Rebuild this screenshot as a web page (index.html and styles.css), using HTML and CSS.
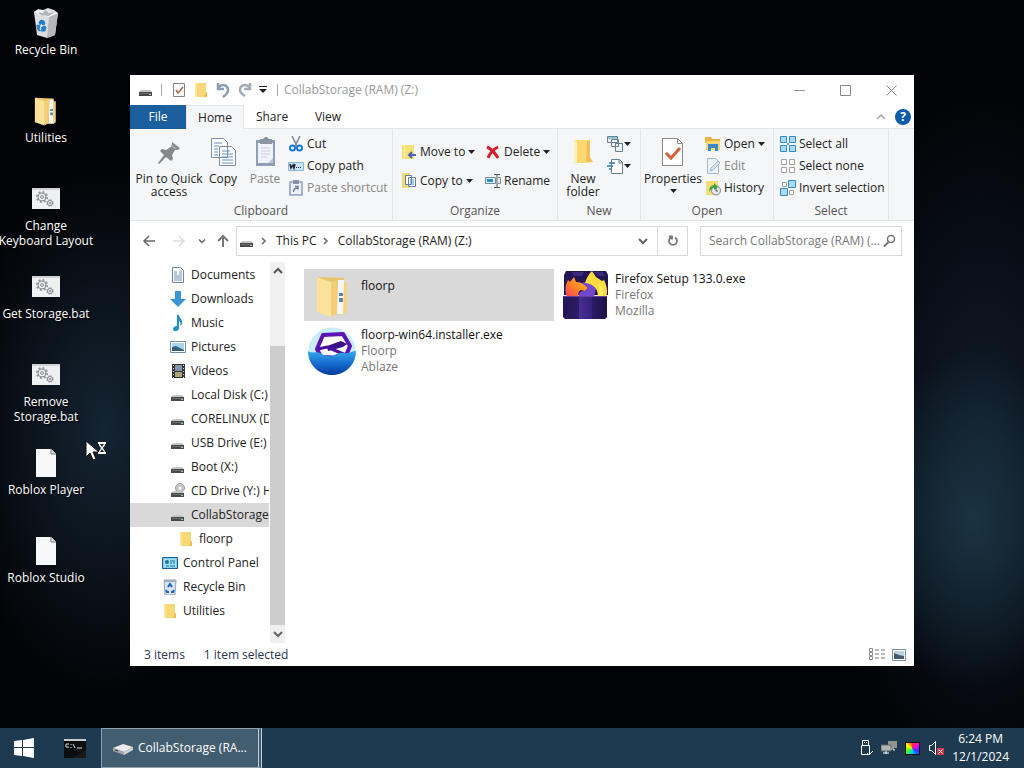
FILE: index.html
```html
<!DOCTYPE html>
<html lang="en">
<head>
  <meta charset="UTF-8" />
  <meta name="viewport" content="width=device-width, initial-scale=1.0" />
  <title>CollabStorage (RAM) (Z:)</title>
  <link rel="stylesheet" href="styles.css">
</head>
<body>
  <!-- shared icons -->
  <svg class="defs" aria-hidden="true">
    <symbol id="drive" viewBox="0 0 16 16">
      <path d="M3 8h9l2 2H1z" fill="#c4c4c4"/>
      <path d="M1 10h13v4H1z" fill="#484848"/>
      <path d="M2 11h11v1H2z" fill="#6c6c6c"/>
      <path d="M11 12h2v1h-2z" fill="#9fc9a5"/>
    </symbol>
    <symbol id="folder" viewBox="0 0 16 16">
      <path d="M2 1h11v10h1v4H2z" fill="#f8d775"/>
      <path d="M2 1h2v14H2z" fill="#fce59a"/>
      <path d="M13 10h1v5h-3z" fill="#e9bf54"/>
    </symbol>
    <symbol id="bigfolder" viewBox="0 0 48 48">
      <path d="M9 6l27 1v36l-18 1z" fill="#e8c368"/>
      <path d="M30 9h6v34h-7z" fill="#f4f6f8"/>
      <path d="M31 22h4v3h-4zM31 27h4v4h-4z" fill="#5d86ad"/>
      <path d="M36 11h3v30l-4 3z" fill="#f4d57c"/>
      <path d="M9 6l14 5v35L9 41z" fill="#fbe29a"/>
      <path d="M23 11l6-2v33l-6 4z" fill="#f2cf77"/>
    </symbol>
    <symbol id="bat" viewBox="0 0 28 22">
      <path d="M0 0h28v21H0z" fill="#eef0f2"/>
      <path d="M0 0h28v2H0z" fill="#cfd3d6"/>
      <g fill="none" stroke="#8b9095">
        <circle cx="10" cy="9" r="4"/><circle cx="10" cy="9" r="1.5"/>
        <circle cx="10" cy="9" r="5" stroke-width="2" stroke-dasharray="1.9 2"/>
        <circle cx="18" cy="15" r="2.6"/><circle cx="18" cy="15" r="1"/>
        <circle cx="18" cy="15" r="3.3" stroke-dasharray="1.3 1.3"/>
      </g>
    </symbol>
    <symbol id="page" viewBox="0 0 22 28">
      <path d="M1 0h15l5 5v23H1z" fill="#f6f8f9"/>
      <path d="M16 0v5h5" fill="#dfe3e6" stroke="#777" stroke-width="1"/>
    </symbol>
    <symbol id="bin" viewBox="0 0 28 30">
      <path d="M2 4l4-3 5 1 5-2 6 2 4 3-3 22-8 3-10-3z" fill="#dcdfe1"/>
      <path d="M17 9l9-4-3 22-8 3z" fill="#b4b8bb"/>
      <path d="M2 4l8-2 6 2 10 1-9 4z" fill="#f7f8f8"/>
      <path d="M6 4l5 1 2-3 4 3 6-1-6 4-8-1z" fill="#aeb4b8"/>
      <path d="M7 14l2-2 3 1 1 3-2 1-2-2-1 2zM5 17l3 1-1 3 1 2-2-1-1-3zM9 20l3-2 2 1-1 4H9v-1l2-1z" fill="#247fcb" stroke="#247fcb"/>
    </symbol>
    <symbol id="caret" viewBox="0 0 7 4"><path d="M0 0h7L3.5 4z" fill="#222"/></symbol>
    <symbol id="chev-right" viewBox="0 0 8 10"><path d="M2 2l3 3-3 3" fill="none" stroke="#666" stroke-width="1.5"/></symbol>
    <symbol id="chev-down" viewBox="0 0 10 8"><path d="M1 2l4 4 4-4" fill="none" stroke="#666" stroke-width="2"/></symbol>
    <symbol id="picture" viewBox="0 0 16 16">
      <path d="M.5 2.5h15v11H.5z" fill="#fff" stroke="#7590a6"/>
      <path d="M2 4h12v8H2z" fill="#a8d5ef"/>
      <path d="M2 8l4-1 8 4v1H2z" fill="#35617c"/>
    </symbol>
  </svg>

  <div class="desktop">
    <ul class="shortcuts">
      <li><svg width="28" height="30"><use href="#bin"/></svg><span>Recycle Bin</span></li>
      <li><svg width="32" height="32" viewBox="4 2 42 46"><use href="#bigfolder" width="48" height="48"/></svg><span>Utilities</span></li>
      <li><svg width="28" height="22"><use href="#bat"/></svg><span>Change<br>Keyboard Layout</span></li>
      <li><svg width="28" height="22"><use href="#bat"/></svg><span>Get Storage.bat</span></li>
      <li><svg width="28" height="22"><use href="#bat"/></svg><span>Remove<br>Storage.bat</span></li>
      <li><svg width="22" height="28"><use href="#page"/></svg><span>Roblox Player</span></li>
      <li><svg width="22" height="28"><use href="#page"/></svg><span>Roblox Studio</span></li>
    </ul>

    <main class="window">
      <header class="titlebar">
        <svg width="16" height="16"><use href="#drive"/></svg>
        <i class="sep"></i>
        <button aria-label="Properties"><svg width="14" height="16" viewBox="0 0 14 16"><path d="M1.5 1.5h11v13h-11z" fill="#fbfbfb" stroke="#8d8179"/><path d="M4 8l2 3 5-6" fill="none" stroke="#9d6f52" stroke-width="1.5"/></svg></button>
        <button aria-label="New folder"><svg width="16" height="16"><use href="#folder"/></svg></button>
        <button aria-label="Undo"><svg width="16" height="16" viewBox="0 0 16 16"><path d="M3 1v6h6M3 6c4-5 10-3 10 2 0 3-2 5-5 7" fill="none" stroke="#8d9db3" stroke-width="2.5"/></svg></button>
        <button aria-label="Redo"><svg width="16" height="16" viewBox="0 0 16 16"><path d="M13 1v6H7M13 6C9 1 3 3 3 8c0 3 2 4 5 6" fill="none" stroke="#a3acb7" stroke-width="2.5"/></svg></button>
        <button aria-label="Customize toolbar" class="narrow"><svg width="8" height="8" viewBox="0 0 8 8"><path d="M0 0h8v1H0zM0 3h8L4 7z" fill="#222"/></svg></button>
        <i class="sep"></i>
        <h1>CollabStorage (RAM) (Z:)</h1>
        <div class="controls">
          <button aria-label="Minimize"><svg width="11" height="11" viewBox="0 0 11 11"><path d="M0 5.5h11" stroke="#999"/></svg></button>
          <button aria-label="Maximize"><svg width="11" height="11" viewBox="0 0 11 11"><path d="M.5.5h10v10H.5z" fill="none" stroke="#888"/></svg></button>
          <button aria-label="Close"><svg width="11" height="11" viewBox="0 0 11 11"><path d="M.5.5l10 10M10.5.5l-10 10" stroke="#888"/></svg></button>
        </div>
      </header>

      <nav class="tabs">
        <button class="file">File</button>
        <button class="active">Home</button>
        <button>Share</button>
        <button>View</button>
        <div class="tabs-right">
          <button aria-label="Collapse ribbon"><svg width="10" height="8" viewBox="0 0 10 8"><path d="M1 6l4-4 4 4" fill="none" stroke="#aaa" stroke-width="1.5"/></svg></button>
          <button class="help" aria-label="Help">?</button>
        </div>
      </nav>

      <div class="ribbon">
        <section class="group clipboard">
          <div class="tools">
            <button class="big pin"><svg width="32" height="32" viewBox="0 0 32 32"><path d="M19 6l8 6-2 2-3 0-3 5 1 4-2 2-5-4-7 7-1-1 6-8-4-4 2-2 4 1 6-4z" fill="#85898c"/><path d="M18 9l5 4" stroke="#b0b4b7" stroke-width="1.5"/></svg>Pin to Quick<br>access</button>
            <button class="big"><svg width="32" height="32" viewBox="0 0 32 32"><g fill="#fff" stroke="#7c8ea6"><path d="M4.5 2.5h12l4 4v15h-16zM12.5 10.5h12l4 4v15h-16z"/></g><path d="M7 7h8M7 10h5M7 13h4M7 16h4M7 19h4M15 15h8M15 18h11M15 21h11M15 24h11M15 27h11" stroke="#5f91c5"/></svg>Copy</button>
            <button class="big off"><svg width="32" height="32" viewBox="0 0 32 32"><path d="M7 4h19v26H7z" fill="#8e9fb8"/><path d="M9 7h15v20H9z" fill="#f0f4fa"/><path d="M11 3h3l2-2h2l2 2h3v5H11z" fill="#8a94a3"/><path d="M12 12h9M12 15h9M12 18h9M12 21h6" stroke="#c3d0e2"/><path d="M24 22v5h-5z" fill="#b8c4d8"/></svg>Paste</button>
            <div class="stack">
              <button><svg width="16" height="16" viewBox="0 0 16 16"><path d="M4 0l5 10M12 0L7 10" stroke="#7d858c" stroke-width="1.5"/><g fill="none" stroke="#1979ca" stroke-width="2"><circle cx="4.500" cy="12" r="2.500"/><circle cx="11.500" cy="12" r="2.500"/></g></svg>Cut</button>
              <button><svg width="16" height="16" viewBox="0 0 16 16"><path d="M.5 4.500h15v8H.5z" fill="#c7e6f7" stroke="#8fb6cf"/><path d="M2 6l1 4 2-3 1 3 1-4" fill="none" stroke="#223" stroke-width="1.500"/><path d="M8 9h1v1H8zM10 9h1v1h-1zM12 9h1v1h-1z" fill="#223"/></svg>Copy path</button>
              <button class="off"><svg width="16" height="16" viewBox="0 0 16 16"><path d="M2 2h12v13H2z" fill="#eef2f8" stroke="#8e9fb8" stroke-width="1.500"/><path d="M5 0h6v4H5z" fill="#8a94a3"/><path d="M5.500 12c0-3 1-4 4-4M7 6.500h3v3" fill="none" stroke="#6f83a0" stroke-width="1.500"/></svg>Paste shortcut</button>
            </div>
          </div>
          <h2>Clipboard</h2>
        </section>

        <section class="group organize">
          <div class="tools">
            <div class="stack">
              <button><svg width="16" height="16" viewBox="0 0 16 16"><path d="M1 1h12v14H1z" fill="#f5df76"/><path d="M3 1h1v14H3z" fill="#fbf0b0"/><path d="M15 11H9M11 8l-3 3 3 3" fill="none" stroke="#4a62b5" stroke-width="2"/></svg>Move to<svg class="caret" width="7" height="4"><use href="#caret"/></svg></button>
              <button><svg width="16" height="16" viewBox="0 0 16 16"><path d="M1 0h8v15H1z" fill="#f5d976"/><path d="M4.500 2.500h6v9h-6zM7.500 4.500h7v9h-7z" fill="#fff" stroke="#627fa8"/><path d="M9 7h4M9 9h4M9 11h4" stroke="#5f91c5"/></svg>Copy to<svg class="caret" width="7" height="4"><use href="#caret"/></svg></button>
            </div>
            <div class="stack">
              <button><svg width="16" height="16" viewBox="0 0 16 16"><path d="M2 3c5 2 8 6 11 11M13 3C9 5 5 9 3 14" fill="none" stroke="#d61f2c" stroke-width="3"/></svg>Delete<svg class="caret" width="7" height="4"><use href="#caret"/></svg></button>
              <button><svg width="16" height="16" viewBox="0 0 16 16"><path d="M.5 4.500h10v6H.5zM13 4.500h2.500v6H13" fill="#e5f1f9" stroke="#6b8ba6"/><path d="M2 6h6v3H2z" fill="#2d8fcc"/><path d="M9 1.500h6M12 1.500v13M9 14.500h6" stroke="#555"/></svg>Rename</button>
            </div>
          </div>
          <h2>Organize</h2>
        </section>

        <section class="group new">
          <div class="tools">
            <button class="big"><svg width="32" height="32" viewBox="0 0 32 32"><path d="M7 4h16v17l3 5-8 1H7z" fill="#ffd76f"/><path d="M7 4l3 1v24l-3-3z" fill="#fff0b5"/><path d="M20 5h3v17l3 4h-7z" fill="#efc15a"/></svg>New<br>folder</button>
            <div class="stack">
              <button aria-label="New item"><svg width="16" height="16" viewBox="0 0 16 16"><g fill="#edf5fa" stroke="#6a7f8e"><path d="M.5.5h10v6H.5zM4.500 3.500h7v7h-7zM8.500 7.500h7v8h-7z"/></g><path d="M1 1h9v2H1z" fill="#90cbd9"/></svg><svg class="caret" width="7" height="4"><use href="#caret"/></svg></button>
              <button aria-label="Easy access"><svg width="16" height="16" viewBox="0 0 16 16"><path d="M4.500 1.500h8l3 3v11h-11z" fill="#fff" stroke="#6a7f8e"/><path d="M12 1v4h4" fill="none" stroke="#6a7f8e"/><path d="M2 5h6M0 8h6M2 11h2" stroke="#287ab5" stroke-width="1.500"/></svg><svg class="caret" width="7" height="4"><use href="#caret"/></svg></button>
            </div>
          </div>
          <h2>New</h2>
        </section>

        <section class="group open">
          <div class="tools">
            <button class="big"><svg width="32" height="32" viewBox="0 0 32 32"><path d="M5.500 2.500h15l5 5v22h-20z" fill="#fff" stroke="#8a8a8a"/><path d="M20.500 2.500v5h5" fill="none" stroke="#8a8a8a"/><path d="M9 17l5 5 9-10" fill="none" stroke="#d56036" stroke-width="3"/></svg>Properties<svg class="caret" width="7" height="4"><use href="#caret"/></svg></button>
            <div class="stack">
              <button><svg width="16" height="16" viewBox="0 0 16 16"><path d="M0 1h6l1 2h8v4H0z" fill="#e9b13e"/><path d="M1 5h14v9H1z" fill="#f7d873"/><path d="M3 15V8h10v7h-3v-3H6v3z" fill="#3c87c9"/></svg>Open<svg class="caret" width="7" height="4"><use href="#caret"/></svg></button>
              <button class="off"><svg width="16" height="16" viewBox="0 0 16 16"><path d="M2.500.5h8l3 3v12h-11z" fill="#edf4fa" stroke="#a5b9c9"/><path d="M5 13l1-3 7-7 2 2-7 7z" fill="#d8e5f0" stroke="#9bb3c7"/></svg>Edit</button>
              <button><svg width="16" height="16" viewBox="0 0 16 16"><path d="M1 1h12v14H1z" fill="#f5dc78"/><circle cx="11" cy="10.500" r="4.500" fill="#e4eaea" stroke="#7d8889"/><path d="M11 8v3h2" fill="none" stroke="#555"/><path d="M4 12c0-4 2-7 5-7V3l4 4-4 3V8c-2 0-4 2-5 4z" fill="#43a047"/></svg>History</button>
            </div>
          </div>
          <h2>Open</h2>
        </section>

        <section class="group select">
          <div class="tools">
            <div class="stack">
              <button><svg width="16" height="16" viewBox="0 0 16 16"><path d="M.5.500h6v6h-6zM9.500.500h6v6h-6zM.5 9.500h6v6h-6zM9.500 9.500h6v6h-6z" fill="#a9dbf8" stroke="#308ac5"/><path d="M7 8h2M8 7v2" stroke="#308ac5"/></svg>Select all</button>
              <button><svg width="16" height="16" viewBox="0 0 16 16"><path d="M1.500 1.500h5v5h-5zM9.500 1.500h5v5h-5zM1.500 9.500h5v5h-5zM9.500 9.500h5v5h-5z" fill="#fff" stroke="#a5a09e"/></svg>Select none</button>
              <button><svg width="16" height="16" viewBox="0 0 16 16"><path d="M2.500 2.500h4v4h-4zM9.500 10.500h4v4h-4z" fill="#fff" stroke="#a5a09e"/><path d="M8.500.5h7v7h-7zM.5 8.500h7v7h-7z" fill="#a9dbf8" stroke="#308ac5"/></svg>Invert selection</button>
            </div>
          </div>
          <h2>Select</h2>
        </section>
      </div>

      <div class="navbar">
        <button class="nav-btn" aria-label="Back"><svg width="14" height="14" viewBox="0 0 14 14"><path d="M13 7H2M7 2L2 7l5 5" fill="none" stroke="#666" stroke-width="1.500"/></svg></button>
        <button class="nav-btn" aria-label="Forward"><svg width="14" height="14" viewBox="0 0 14 14"><path d="M1 7h11M7 2l5 5-5 5" fill="none" stroke="#ddd" stroke-width="1.500"/></svg></button>
        <button class="nav-btn recent" aria-label="Recent locations"><svg width="8" height="6" viewBox="0 0 10 8"><use href="#chev-down" width="10" height="8"/></svg></button>
        <button class="nav-btn up" aria-label="Up"><svg width="14" height="14" viewBox="0 0 14 14"><path d="M7 13V2M2 7l5-5 5 5" fill="none" stroke="#777" stroke-width="2"/></svg></button>
        <div class="address">
          <svg width="16" height="16"><use href="#drive"/></svg>
          <svg class="crumb" width="8" height="10"><use href="#chev-right"/></svg>
          <a href="#">This PC</a>
          <svg class="crumb" width="8" height="10"><use href="#chev-right"/></svg>
          <a href="#">CollabStorage (RAM) (Z:)</a>
          <button class="drop" aria-label="Previous locations"><svg width="10" height="8"><use href="#chev-down"/></svg></button>
          <button class="refresh" aria-label="Refresh"><svg width="12" height="12" viewBox="0 0 12 12"><path d="M8 2.500a4 4 0 1 1-4 0M2 1.500h3v3" fill="none" stroke="#777" stroke-width="1.800"/></svg></button>
        </div>
        <label class="search">
          <input type="text" aria-label="Search" placeholder="Search CollabStorage (RAM) (...">
          <svg width="14" height="14" viewBox="0 0 14 14"><circle cx="9" cy="5" r="3.500" fill="none" stroke="#777" stroke-width="1.500"/><path d="M6.500 8L2 12.500" stroke="#777" stroke-width="2"/></svg>
        </label>
      </div>

      <div class="content">
        <aside class="sidebar">
          <ul class="tree">
            <li><svg width="16" height="16" viewBox="0 0 16 16"><path d="M2.500.5h8l3 3v12h-11z" fill="#fff" stroke="#70869b"/><path d="M4 5h3M4 7h3M4 9h8M4 11h8M4 13h8M9 5h3M9 7h3" stroke="#6a91b5"/></svg>Documents</li>
            <li><svg width="16" height="16" viewBox="0 0 16 16"><path d="M5 0h6v8h5l-8 8-8-8h5z" fill="#3a95d8"/></svg>Downloads</li>
            <li><svg width="16" height="16" viewBox="0 0 16 16"><path d="M7 0h2c0 3 4 4 3 9l-2 2c1-3 0-5-1-5v7c0 4-6 4-6 1 0-2 2-3 4-3z" fill="#1e90c8"/></svg>Music</li>
            <li><svg width="16" height="16"><use href="#picture"/></svg>Pictures</li>
            <li><svg width="16" height="16" viewBox="0 0 16 16"><path d="M2 1h13v14H2z" fill="#333"/><path d="M5 2h7v6H5z" fill="#7f96a8"/><path d="M5 9h7v5H5z" fill="#b0a276"/><path d="M3.500 2v13M13.500 2v13" stroke="#ddd" stroke-dasharray="1 2"/></svg>Videos</li>
            <li><svg width="16" height="16"><use href="#drive"/></svg>Local Disk (C:)</li>
            <li><svg width="16" height="16"><use href="#drive"/></svg>CORELINUX (D</li>
            <li><svg width="16" height="16"><use href="#drive"/></svg>USB Drive (E:)</li>
            <li><svg width="16" height="16"><use href="#drive"/></svg>Boot (X:)</li>
            <li><svg width="16" height="16" viewBox="0 0 16 16"><circle cx="10" cy="5" r="4.500" fill="#c8c8c8" stroke="#999"/><circle cx="10" cy="5" r="1.500" fill="#fff"/><use href="#drive" width="16" height="16"/></svg>CD Drive (Y:) H</li>
            <li class="selected"><svg width="16" height="16"><use href="#drive"/></svg>CollabStorage</li>
            <li class="deep"><svg width="16" height="16"><use href="#folder"/></svg>floorp</li>
            <li class="top"><svg width="16" height="16" viewBox="0 0 16 16"><path d="M.5 2.500h15v11H.5z" fill="#7ed0ef" stroke="#1c5d97"/><path d="M2 4h12v8H2z" fill="#9ce1f3"/><circle cx="5" cy="7" r="2" fill="#1d70a5"/><path d="M8 6h5M8 8h2M11 8h2M4 11h3M8 11h5" stroke="#246da0"/></svg>Control Panel</li>
            <li class="top"><svg width="16" height="16" viewBox="0 0 16 16"><path d="M2 1h12l-1 15H3z" fill="#d8e2ea" stroke="#94a6b4"/><path d="M2 1h12v2H2z" fill="#9fb0bd"/><path d="M6 8l2-3 2 3M4 11l1 2h2M12 11l-1 2H9" fill="none" stroke="#2166b2" stroke-width="2"/></svg>Recycle Bin</li>
            <li class="top"><svg width="16" height="16"><use href="#folder"/></svg>Utilities</li>
          </ul>
          <div class="scrollbar">
            <button aria-label="Scroll up"><svg width="10" height="8" viewBox="0 0 10 8"><path d="M1 6l4-4 4 4" fill="none" stroke="#555" stroke-width="2"/></svg></button>
            <div class="track"><div class="thumb"></div></div>
            <button aria-label="Scroll down"><svg width="10" height="8"><use href="#chev-down"/></svg></button>
          </div>
        </aside>

        <div class="files">
          <div class="tile selected">
            <svg width="48" height="48"><use href="#bigfolder"/></svg>
            <div class="info"><strong>floorp</strong></div>
          </div>
          <div class="tile">
            <svg width="48" height="48" viewBox="0 0 48 48">
              <defs>
                <linearGradient id="fire" x1="0" x2="1" y1="1" y2="0"><stop offset="0" stop-color="#f43b60"/><stop offset=".5" stop-color="#ff8a22"/><stop offset="1" stop-color="#ffbd35"/></linearGradient>
                <linearGradient id="box" x1="0" x2="1"><stop offset="0" stop-color="#241653"/><stop offset=".36" stop-color="#2b1c66"/><stop offset=".37" stop-color="#4a2e94"/><stop offset=".65" stop-color="#35227a"/><stop offset=".66" stop-color="#2b1c66"/><stop offset="1" stop-color="#201047"/></linearGradient>
              </defs>
              <path d="M4 0h40l2 4v20H2V4z" fill="#251453"/>
              <path d="M10 1h12l-2 4h-8zM32 1h9l2 4h-7z" fill="#3b2a80"/>
              <path d="M5 26C2 18 4 13 6 9l2 2 4-5 2 5c6 0 9 3 12 6l-3 3-4-1c-3 1-3 5-2 7z" fill="url(#fire)"/>
              <path d="M20 12c6-3 12 0 14 5l-2 9H17c-1-3 1-6 4-6 3 0 5-2 4-4z" fill="#7447cf"/>
              <path d="M23 12c2-6 4-9 7-12l4 6 6 4 2-1c3 6 4 12 2 17h-8c0-8-4-13-13-14z" fill="#ffdc3d"/>
              <path d="M37 12c3 4 5 9 4 14h-5c1-3 2-8 1-14z" fill="#fff064"/>
              <path d="M1 26h44v20l-2 2H3l-2-2z" fill="url(#box)"/>
              <path d="M1 25h44v1H1z" fill="#65409b"/>
            </svg>
            <div class="info"><strong>Firefox Setup 133.0.exe</strong><span>Firefox</span><span>Mozilla</span></div>
          </div>
          <div class="tile">
            <svg width="48" height="48" viewBox="0 0 48 48">
              <defs><linearGradient id="sea" x1="0" x2="0" y1="0" y2="1"><stop offset="0" stop-color="#36a8ec"/><stop offset=".5" stop-color="#176ed2"/><stop offset="1" stop-color="#053b9d"/></linearGradient></defs>
              <circle cx="24" cy="24" r="23.500" fill="#c9eefb"/>
              <path d="M15 8l20-1 7 12-5 12-24-1-4-8z" fill="#fff" stroke="#5c13b4" stroke-width="4" stroke-linejoin="round"/>
              <path d="M19 19l14-5 6 3-4 3-15 4z" fill="#38108a"/>
              <path d="M10 22l9-2 19 8" fill="none" stroke="#4a10a0" stroke-width="3"/>
              <path d="M0 24c4 3 8 0 12 2s8 4 12 3 7-4 12-3 8-2 12-2c0 14-11 24-24 24S0 38 0 24z" fill="url(#sea)"/>
            </svg>
            <div class="info"><strong>floorp-win64.installer.exe</strong><span>Floorp</span><span>Ablaze</span></div>
          </div>
        </div>
      </div>

      <footer class="statusbar">
        <span>3 items</span>
        <span>1 item selected</span>
        <div class="views">
          <button aria-label="Details view"><svg width="17" height="13" viewBox="0 0 17 13"><path d="M.5.5h3v3h-3zM.5 4.500h3v3h-3zM.5 8.500h3v3h-3z" fill="none" stroke="#8a8a8a"/><path d="M6 2h4M6 6h4M6 10h4M12 2h4M12 6h4M12 10h4" stroke="#777"/></svg></button>
          <button aria-label="Large icons view"><svg width="14" height="12" viewBox="0 0 14 12"><path d="M.5.5h13v11H.5z" fill="#fff" stroke="#7590a6"/><path d="M2 2h10v8H2z" fill="#bdd4e3"/><path d="M2 4l5 2 5 1v3H2z" fill="#45596b"/></svg></button>
        </div>
      </footer>
    </main>

    <!-- busy pointer -->
    <svg class="pointer" width="22" height="22" viewBox="0 0 22 22">
      <path d="M1 1v16l4-4 3 7 3-1-3-7h6z" fill="#fff" stroke="#111"/>
      <path d="M13 2h8v2h-1c0 3-2 3-2 4s2 2 2 4h1v2h-8v-2h1c0-2 2-3 2-4s-2-1-2-4h-1z" fill="#fff"/>
      <path d="M15 4h4l-2 3zM17 9l2 3h-4z" fill="#222"/>
    </svg>
  </div>

  <footer class="taskbar">
    <button class="start" aria-label="Start"><svg width="20" height="20" viewBox="0 0 20 20"><path d="M0 3l8-1v7H0zM9 2l11-2v9H9zM0 10h8v8l-8-1zM9 10h11v10L9 18z" fill="#fff"/></svg></button>
    <button class="cmd" aria-label="Command Prompt"><svg width="22" height="19" viewBox="0 0 22 19"><path d="M0 0h22v19H0z" fill="#0b0d0e"/><path d="M0 0h22v2H0z" fill="#c6cbce"/><path d="M2 5h3M2 5v3h3M7 5v1M7 8v1M9 5l2 4M13 9h5" stroke="#ddd" fill="none"/><path d="M22 11v8H8z" fill="#222" opacity=".6"/></svg></button>
    <button class="task">
      <svg width="22" height="14" viewBox="0 0 22 14"><path d="M1 7l10-4 10 3-9 5z" fill="#e9ebec"/><path d="M1 7l11 4v3L1 10z" fill="#a2a6a9"/><path d="M12 11l9-5v3l-9 5z" fill="#cfd2d4"/><path d="M3 9l3 1" stroke="#333"/></svg>
      <span>CollabStorage (RA...</span>
    </button>
    <div class="tray">
      <svg width="14" height="18" viewBox="0 0 14 18"><path d="M3.500 6V1.500h6V6M2.500 6.500h8v9h-8zM5 3.500h1M7 3.500h1" fill="none" stroke="#fff"/><path d="M8 14l2 2 4-4" fill="none" stroke="#fff"/></svg>
      <svg width="16" height="16" viewBox="0 0 16 16"><path d="M7 1h9v7H7z" fill="#8f9394"/><path d="M0 5h10v6H0z" fill="#b5b5b2" stroke="#5e676d"/><path d="M2 13h6M5 11v3M10 9h3v2" stroke="#fff"/></svg>
      <i class="spectrum"></i>
      <svg width="16" height="16" viewBox="0 0 16 16"><path d="M1.500 5.500h2l4-4v13l-4-4h-2z" fill="none" stroke="#fff"/><path d="M9 8h7v7H9z" fill="#d9364c"/><path d="M10.500 9.500l4 4M14.500 9.500l-4 4" stroke="#fff"/></svg>
      <time>6:24 PM<br>12/1/2024</time>
    </div>
  </footer>
</body>
</html>
```
FILE: styles.css
```css
* {
  box-sizing: border-box;
}
body {
  display: flex;
  flex-direction: column;
  height: 100vh;
  margin: 0;
  overflow: hidden;
  background-color: #020306;
  background-image:
    radial-gradient(ellipse 150px 270px at 105px 430px, #142432, transparent),
    radial-gradient(ellipse 110px 170px at calc(100% - 50px) 520px, #1a3342, transparent),
    radial-gradient(ellipse 160px 360px at calc(100% - 40px) 440px, #101c2a, transparent);
  color: #222;
  font-family: "Open Sans", "Noto Sans", sans-serif;
  font-size: 12px;
  line-height: 16px;
}
ul {
  list-style: none;
  margin: 0;
  padding: 0;
}
h1, h2 {
  margin: 0;
  font-size: 12px;
  font-weight: normal;
}
button {
  display: flex;
  flex: none;
  align-items: center;
  justify-content: center;
  padding: 0;
  border: 0;
  background: none;
  color: inherit;
  font: inherit;
  white-space: nowrap;
}
svg {
  flex: none;
}
a {
  color: inherit;
  text-decoration: none;
}
.defs {
  position: absolute;
  width: 0;
  height: 0;
}

/* desktop */
.desktop {
  position: relative;
  flex: 1;
}
.shortcuts {
  width: 92px;
  padding-top: 7px;
}
.shortcuts li {
  display: flex;
  flex-direction: column;
  align-items: center;
  height: 88px;
  color: #fff;
  line-height: 15px;
  text-align: center;
  text-shadow: 1px 1px 2px #000;
  white-space: nowrap;
}
.shortcuts svg {
  height: 32px;
  margin-bottom: 3px;
}
.pointer {
  position: absolute;
  left: 85px;
  top: 440px;
}

/* explorer window */
.window {
  position: absolute;
  left: 130px;
  top: 75px;
  right: 110px;
  bottom: 62px;
  display: flex;
  flex-direction: column;
  background: #fff;
}
.titlebar {
  display: flex;
  align-items: center;
  height: 30px;
  padding-left: 8px;
  color: #999;
}
.titlebar > button {
  width: 22px;
}
.titlebar > .narrow {
  width: 14px;
}
.sep {
  width: 1px;
  height: 12px;
  margin: 0 6px 0 7px;
  background: #aaa;
}
.controls {
  display: flex;
  margin-left: auto;
}
.controls button {
  width: 46px;
  height: 28px;
}
.tabs {
  display: flex;
  height: 24px;
  border-bottom: 1px solid #e3e5e8;
}
.tabs > button {
  width: 56px;
  height: 24px;
}
.tabs .file {
  background: #1c5f9e;
  color: #fff;
}
.tabs .active {
  width: 58px;
  border: 1px solid #e3e5e8;
  border-bottom: 0;
  background: #f5f6f7;
}
.tabs-right {
  display: flex;
  align-items: center;
  gap: 9px;
  margin-left: auto;
  padding-right: 3px;
}
.help {
  width: 16px;
  height: 16px;
  border-radius: 50%;
  background: #0c5cab;
  color: #fff;
  font-weight: bold;
}

/* ribbon */
.ribbon {
  display: flex;
  height: 92px;
  border-bottom: 1px solid #e3e5e8;
  background: #f5f6f7;
}
.group {
  display: flex;
  flex: none;
  flex-direction: column;
  border-right: 1px solid #e3e5e8;
}
.group h2 {
  color: #555;
  text-align: center;
}
.tools {
  display: flex;
  height: 74px;
  padding: 4px 0 0 6px;
}
.big {
  flex-direction: column;
  justify-content: flex-start;
  width: 42px;
  padding-top: 3px;
  line-height: 13px;
}
.big svg {
  margin-bottom: 4px;
}
.big .caret {
  margin: 4px 0 0;
}
.stack {
  display: flex;
  flex-direction: column;
}
.stack button {
  justify-content: flex-start;
  gap: 3px;
  height: 22px;
}
.off {
  color: #888;
}
.clipboard {
  width: 263px;
}
.clipboard .pin {
  width: 66px;
}
.clipboard .stack {
  margin-left: 2px;
}
.organize {
  width: 165px;
}
.organize .stack {
  gap: 7px;
  width: 78px;
  padding: 8px 0 0 2px;
}
.organize .stack + .stack {
  padding-left: 8px;
}
.new {
  width: 83px;
}
.new .tools,
.open .tools {
  padding-left: 4px;
}
.new .stack {
  margin-left: 3px;
}
.new .stack button {
  gap: 1px;
}
.open {
  width: 133px;
}
.open .big {
  width: 56px;
}
.open .stack {
  margin-left: 4px;
}
.select {
  width: 115px;
}

/* address row */
.navbar {
  display: flex;
  align-items: center;
  height: 41px;
  padding: 0 12px 1px 4px;
}
.nav-btn {
  width: 30px;
  height: 30px;
}
.recent {
  width: 16px;
}
.up {
  width: 26px;
}
.address {
  display: flex;
  flex: 1;
  align-items: center;
  height: 30px;
  padding-left: 2px;
  border: 1px solid #d9d9d9;
}
.crumb {
  margin: 0 8px 0 5px;
}
.drop {
  width: 28px;
  height: 28px;
  margin-left: auto;
}
.refresh {
  width: 30px;
  height: 28px;
  border-left: 1px solid #d9d9d9;
}
.search {
  display: flex;
  align-items: center;
  width: 202px;
  height: 30px;
  margin-left: 12px;
  padding: 0 5px 0 8px;
  border: 1px solid #d9d9d9;
}
.search input {
  flex: 1;
  min-width: 0;
  padding: 0;
  border: 0;
  outline: 0;
  background: none;
  font: inherit;
}
.search input::placeholder {
  color: #777;
}

/* body */
.content {
  display: flex;
  flex: 1;
  min-height: 0;
}
.sidebar {
  display: flex;
  width: 155px;
}
.tree {
  width: 139px;
  margin-right: 1px;
  padding-top: 1px;
  overflow: hidden;
}
.tree li {
  display: flex;
  align-items: center;
  gap: 5px;
  height: 24px;
  padding-left: 40px;
  white-space: nowrap;
}
.tree .deep {
  padding-left: 48px;
}
.tree .top {
  padding-left: 32px;
}
.selected {
  background: #d9d9d9;
}
.scrollbar {
  display: flex;
  flex-direction: column;
  width: 15px;
  background: #f0f0f0;
}
.scrollbar button {
  height: 18px;
}
.track {
  display: flex;
  flex: 1;
  align-items: flex-end;
}
.thumb {
  width: 100%;
  height: 81%;
  background: #cdcdcd;
}
.files {
  display: grid;
  flex: 1;
  grid-template-columns: repeat(auto-fill, 250px);
  grid-auto-rows: 52px;
  gap: 4px;
  padding: 7px 0 0 19px;
}
.tile {
  display: flex;
  align-items: center;
  gap: 5px;
  padding-left: 4px;
}
.info {
  display: flex;
  flex-direction: column;
  min-height: 34px;
  color: #777;
}
.info strong {
  color: #111;
  font-weight: normal;
}
.statusbar {
  display: flex;
  align-items: center;
  gap: 19px;
  height: 23px;
  padding: 0 8px 0 14px;
  color: #2b3350;
}
.views {
  display: flex;
  gap: 6px;
  margin-left: auto;
}

/* taskbar */
.taskbar {
  display: flex;
  height: 40px;
  background: #1e3a50;
  color: #fff;
}
.start {
  width: 48px;
}
.cmd {
  width: 53px;
}
.task {
  justify-content: flex-start;
  gap: 4px;
  width: 161px;
  padding-left: 10px;
  border: 1px solid #8fa0ad;
  border-right: 4px double #c4ced6;
  background: #435d70;
}
.tray {
  display: flex;
  align-items: center;
  gap: 8px;
  margin-left: auto;
  padding-right: 15px;
}
.tray time {
  line-height: 18px;
  text-align: center;
}
.spectrum {
  width: 15px;
  height: 13px;
  border: 1px solid #111;
  background: conic-gradient(#f33, #f0f, #33f, #0cf, #3f3, #ff0, #f33);
}
```
